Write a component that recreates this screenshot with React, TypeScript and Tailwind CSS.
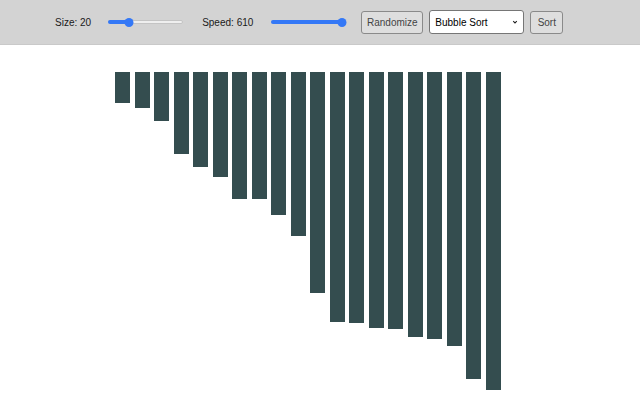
import { useState } from "react";

const initialBars = [
  31, 36, 49, 82, 95, 105, 127, 127, 143, 164, 221, 250, 251, 256, 257, 265,
  267, 274, 307, 318,
];

function RangeSlider({ thumbAt }: { thumbAt: number }) {
  // thumbAt = pixel offset of the thumb centre from the track start
  return (
    <div className="relative flex h-[10px] w-[75px] items-center">
      <div className="h-[4px] w-full rounded-full border border-[#c4c4c4] bg-[#efefef]" />
      <div
        className="absolute left-0 h-[4px] rounded-full bg-[#3478f6]"
        style={{ width: thumbAt }}
      />
      <div
        className="absolute h-[9px] w-[9px] -translate-x-1/2 rounded-full bg-[#3478f6]"
        style={{ left: thumbAt }}
      />
    </div>
  );
}

export default function App() {
  const [bars] = useState(initialBars);
  const [size] = useState(20);
  const [speed] = useState(610);

  return (
    <div className="min-h-screen bg-white font-['Liberation_Sans',Arial,sans-serif]">
      <header className="flex h-[45px] items-center border-b border-[#c9c9c9] bg-[#d3d3d3] pl-[55px] text-[10px] text-[#1a1a1a]">
        <span>Size: {size}</span>
        <div className="ml-[17px]">
          <RangeSlider thumbAt={21} />
        </div>
        <span className="ml-[19px]">Speed: {speed}</span>
        <div className="ml-[18px]">
          <RangeSlider thumbAt={71} />
        </div>
        <button className="ml-[15px] h-[23px] w-[62px] rounded-[3px] border border-[#8a8a8a] bg-[#dedede] text-[10px] text-[#444]">
          Randomize
        </button>
        <div className="relative ml-[6px] flex h-[24px] w-[95px] items-center rounded-[3px] border border-[#767676] bg-white pl-[5px] text-[10px] text-black">
          Bubble Sort
          <svg
            viewBox="0 0 10 10"
            className="absolute right-[5px] h-[6px] w-[6px]"
            fill="none"
            stroke="#222"
            strokeWidth="1.8"
          >
            <path d="M2 3.5 L5 6.5 L8 3.5" />
          </svg>
        </div>
        <button className="ml-[6px] h-[23px] w-[33px] rounded-[3px] border border-[#8a8a8a] bg-[#dedede] text-[10px] text-[#444]">
          Sort
        </button>
      </header>

      <main className="flex items-start gap-[4.5px] pl-[115px] pt-[27px]">
        {bars.map((h, i) => (
          <div
            key={i}
            className="w-[15px] bg-[#344d4f]"
            style={{ height: h }}
          />
        ))}
      </main>
    </div>
  );
}
